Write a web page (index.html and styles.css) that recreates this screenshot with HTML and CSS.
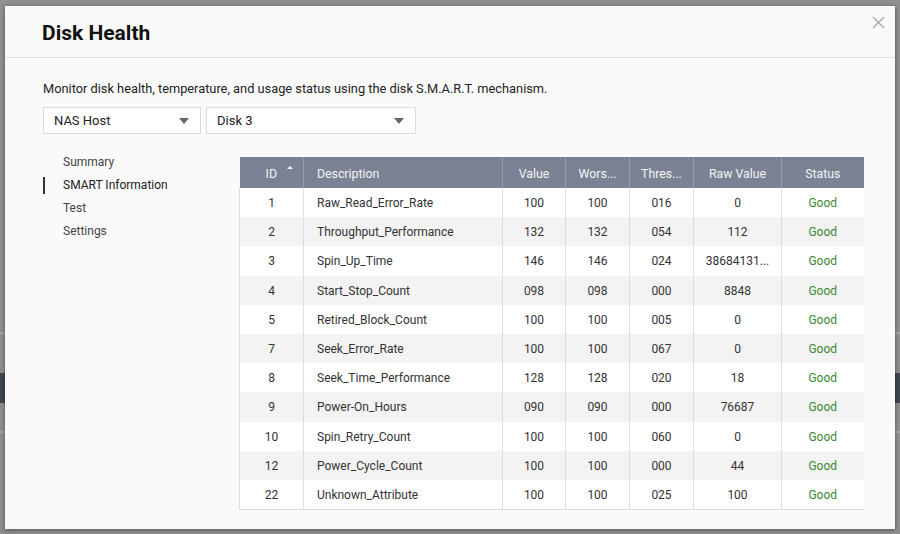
FILE: index.html
```html
<!DOCTYPE html>
<html>
<head>
    <title>Disk Health</title>
    <link rel="stylesheet" href="styles.css">
</head>
<body>
    <div class="modal">
        <div class="modal-header">
            <h1>Disk Health</h1>
            <button class="close" aria-label="Close">
                <svg width="13" height="13" viewBox="0 0 13 13"><path d="M1 1L12 12M12 1L1 12" stroke="#a9a9a9" stroke-width="1.4" fill="none"/></svg>
            </button>
        </div>
        <div class="modal-body">
            <p class="intro">Monitor disk health, temperature, and usage status using the disk S.M.A.R.T. mechanism.</p>
            <div class="selects">
                <div class="select host">NAS Host <span class="caret"></span></div>
                <div class="select disk">Disk 3 <span class="caret"></span></div>
            </div>
            <div class="content">
                <ul class="side-nav">
                    <li>Summary</li>
                    <li class="active">SMART Information</li>
                    <li>Test</li>
                    <li>Settings</li>
                </ul>
                <table class="smart">
                    <colgroup>
                        <col class="c-id">
                        <col class="c-desc">
                        <col class="c-val">
                        <col class="c-worst">
                        <col class="c-thr">
                        <col class="c-raw">
                        <col class="c-status">
                    </colgroup>
                    <thead>
                        <tr>
                            <th class="sorted">ID<span class="sort"></span></th>
                            <th class="left">Description</th>
                            <th>Value</th>
                            <th>Wors...</th>
                            <th>Thres...</th>
                            <th>Raw Value</th>
                            <th>Status</th>
                        </tr>
                    </thead>
                    <tbody id="rows"></tbody>
                </table>
            </div>
        </div>
    </div>

    <script>
        const attrs = [
            [1, 'Raw_Read_Error_Rate', '100', '100', '016', '0'],
            [2, 'Throughput_Performance', '132', '132', '054', '112'],
            [3, 'Spin_Up_Time', '146', '146', '024', '38684131...'],
            [4, 'Start_Stop_Count', '098', '098', '000', '8848'],
            [5, 'Retired_Block_Count', '100', '100', '005', '0'],
            [7, 'Seek_Error_Rate', '100', '100', '067', '0'],
            [8, 'Seek_Time_Performance', '128', '128', '020', '18'],
            [9, 'Power-On_Hours', '090', '090', '000', '76687'],
            [10, 'Spin_Retry_Count', '100', '100', '060', '0'],
            [12, 'Power_Cycle_Count', '100', '100', '000', '44'],
            [22, 'Unknown_Attribute', '100', '100', '025', '100']
        ];

        const tbody = document.getElementById('rows');
        attrs.forEach(a => {
            const tr = document.createElement('tr');
            a.forEach((v, i) => {
                const td = document.createElement('td');
                td.textContent = v;
                if (i === 1) td.className = 'left';
                tr.appendChild(td);
            });
            const status = document.createElement('td');
            status.className = 'good';
            status.textContent = 'Good';
            tr.appendChild(status);
            tbody.appendChild(tr);
        });
    </script>
</body>
</html>
```

FILE: styles.css
```css
body {
    margin: 0;
    height: 534px;
    overflow: hidden;
    font-family: Roboto, "Liberation Sans", sans-serif;
    color: #333;
    background: linear-gradient(#8f8f8f 0, #8f8f8f 332px, #a4a4a4 332px, #a4a4a4 334px,
        #8f8f8f 334px, #8f8f8f 373px, #40464e 373px, #40464e 403px,
        #8f8f8f 403px, #8f8f8f 431px, #a4a4a4 431px, #a4a4a4 433px, #8f8f8f 433px);
    padding: 6px 5px 0;
}
.modal {
    width: 890px;
    height: 523px;
    background: #fafafa;
    box-shadow: 0 1px 4px rgba(0, 0, 0, 0.45);
    box-sizing: border-box;
}
.modal-header {
    height: 52px;
    border-bottom: 1px solid #dedede;
    display: flex;
    align-items: center;
    justify-content: space-between;
    padding: 0 10px 0 37px;
    box-sizing: border-box;
}
.modal-header h1 {
    margin: 0;
    font-size: 21px;
    font-weight: 700;
    color: #111;
    padding-top: 2px;
}
.close {
    align-self: flex-start;
    margin-top: 10px;
    background: none;
    border: none;
    padding: 0;
    width: 13px;
    height: 13px;
    cursor: pointer;
}
.modal-body {
    padding: 0 0 0 38px;
}
.intro {
    margin: 0;
    padding-top: 22px;
    font-size: 12.8px;
    line-height: 17px;
    color: #222;
}
.selects {
    display: flex;
    gap: 5px;
    margin-top: 10px;
}
.select {
    height: 27px;
    box-sizing: border-box;
    border: 1px solid #dcdcdc;
    background: #fff;
    font-size: 13px;
    display: flex;
    align-items: center;
    justify-content: space-between;
    padding: 0 11px 0 10px;
    color: #222;
}
.select.host { width: 158px; }
.select.disk { width: 210px; }
.caret {
    width: 0;
    height: 0;
    border-left: 5px solid transparent;
    border-right: 5px solid transparent;
    border-top: 6px solid #666;
}
.content {
    display: flex;
    margin-top: 16px;
}
.side-nav {
    list-style: none;
    margin: 1px 0 0;
    padding: 0;
    width: 196px;
    flex-shrink: 0;
}
.side-nav li {
    font-size: 12px;
    line-height: 23px;
    padding-left: 20px;
    color: #444;
    position: relative;
}
.side-nav li.active {
    color: #222;
}
.side-nav li.active::before {
    content: "";
    position: absolute;
    left: 0;
    top: 3px;
    width: 2px;
    height: 17px;
    background: #333;
}
.smart {
    margin-top: 7px;
    border-collapse: collapse;
    width: 624px;
    table-layout: fixed;
    font-size: 12px;
    align-self: flex-start;
}
.c-id { width: 64px; }
.c-desc { width: 199px; }
.c-val { width: 63px; }
.c-worst { width: 64px; }
.c-thr { width: 64px; }
.c-raw { width: 88px; }
.c-status { width: 82px; }
.smart th {
    background: #7b8294;
    color: #f3f4f6;
    font-weight: 400;
    font-size: 12.3px;
    height: 29px;
    padding: 2px 0 0;
    border-left: 1px solid #949aa8;
    text-align: center;
    white-space: nowrap;
}
.smart th:first-child { border-left: none; }
.smart th.sorted { position: relative; }
.smart td {
    height: 28.2px;
    padding: 1px 0 0;
    text-align: center;
    border-left: 1px solid #dedede;
    color: #333;
    white-space: nowrap;
    overflow: hidden;
}
.smart tbody tr:nth-child(odd) { background: #fff; }
.smart tbody tr:nth-child(even) { background: #f3f3f3; }
.smart tbody tr:last-child td { border-bottom: 1px solid #dedede; }
.smart .left {
    text-align: left;
    padding-left: 13px;
}
.smart td.good { color: #3a8a32; }
.sort {
    position: absolute;
    left: 47px;
    top: 9px;
    width: 0;
    height: 0;
    border-left: 3px solid transparent;
    border-right: 3px solid transparent;
    border-bottom: 3px solid #f3f4f6;
}
```
